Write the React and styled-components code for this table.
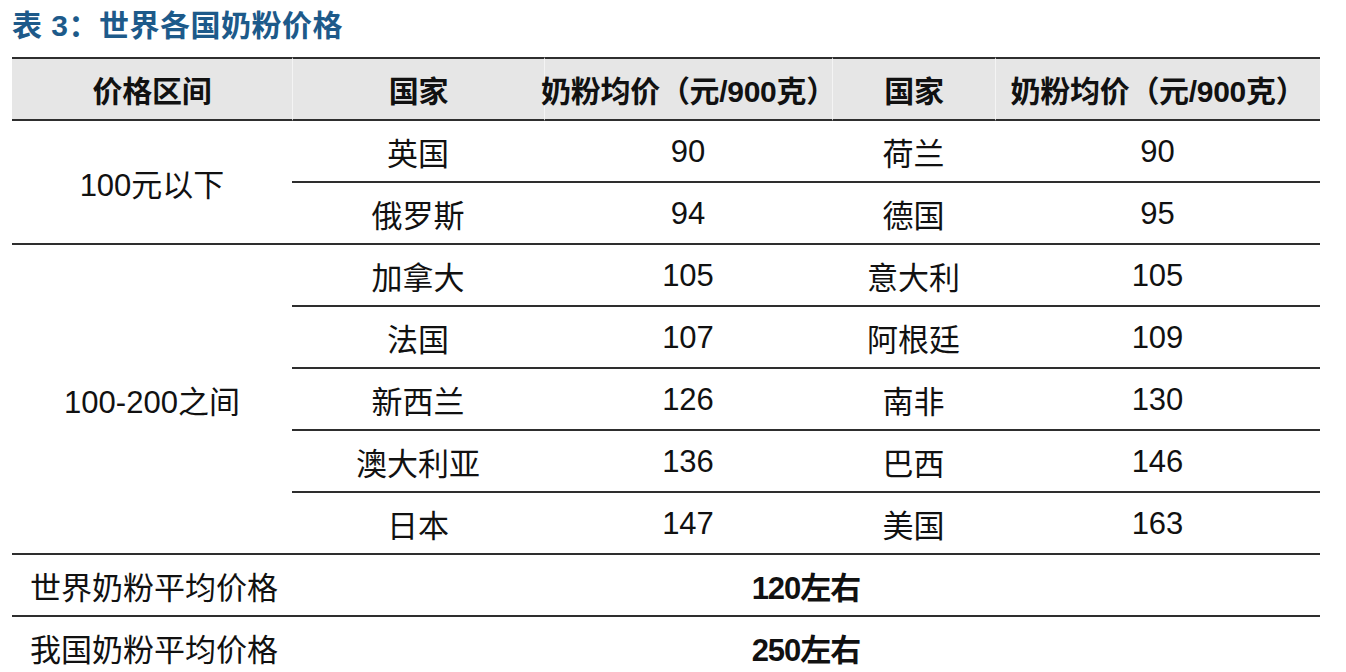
import React from 'react';
import styled, { createGlobalStyle } from 'styled-components';

const GlobalStyle = createGlobalStyle`
  html, body {
    margin: 0;
    padding: 0;
    background: #ffffff;
  }
  body {
    font-family: "Liberation Sans", "Noto Sans CJK SC", sans-serif;
    color: #111;
  }
`;

const groups = [
  {
    range: '100元以下',
    rows: [
      ['英国', '90', '荷兰', '90'],
      ['俄罗斯', '94', '德国', '95'],
    ],
  },
  {
    range: '100-200之间',
    rows: [
      ['加拿大', '105', '意大利', '105'],
      ['法国', '107', '阿根廷', '109'],
      ['新西兰', '126', '南非', '130'],
      ['澳大利亚', '136', '巴西', '146'],
      ['日本', '147', '美国', '163'],
    ],
  },
];

const summary = [
  ['世界奶粉平均价格', '120左右'],
  ['我国奶粉平均价格', '250左右'],
];

const App = () => {
  let row = 2;
  return (
    <Page>
      <GlobalStyle />
      <Title>表 3：世界各国奶粉价格</Title>
      <Table>
        <HeadCell>价格区间</HeadCell>
        <HeadCell $divider>国家</HeadCell>
        <HeadCell $divider>奶粉均价（元/900克）</HeadCell>
        <HeadCell $divider>国家</HeadCell>
        <HeadCell $divider>奶粉均价（元/900克）</HeadCell>

        {groups.map((g) => {
          const start = row;
          row += g.rows.length;
          return (
            <React.Fragment key={g.range}>
              <RangeCell style={{ gridRow: `${start} / span ${g.rows.length}` }}>
                {g.range}
              </RangeCell>
              {g.rows.map((r, i) =>
                r.map((v, j) => (
                  <Cell
                    key={`${g.range}-${i}-${j}`}
                    style={{ gridRow: start + i, gridColumn: j + 2 }}
                  >
                    {v}
                  </Cell>
                ))
              )}
            </React.Fragment>
          );
        })}

        {summary.map(([label, value]) => (
          <React.Fragment key={label}>
            <LabelCell>{label}</LabelCell>
            <ValueCell>{value}</ValueCell>
          </React.Fragment>
        ))}
      </Table>
    </Page>
  );
};

export default App;

const Page = styled.div`
  padding: 8px 0 0 12px;
  width: 1308px;
`;

const Title = styled.h2`
  margin: 0;
  height: 49px;
  font-size: 30px;
  line-height: 36px;
  font-weight: bold;
  color: #1d5a8a;
  letter-spacing: 0.5px;
`;

const Table = styled.div`
  display: grid;
  grid-template-columns: 280px 252px 288px 163px 325px;
  grid-template-rows: 64px;
  grid-auto-rows: 62px;
  font-size: 31px;
`;

const BaseCell = styled.div`
  box-sizing: border-box;
  display: flex;
  align-items: center;
  justify-content: center;
  border-bottom: 2px solid #2e2e2e;
  white-space: nowrap;
`;

const HeadCell = styled(BaseCell)`
  background: #e6e6e6;
  border-top: 2px solid #2e2e2e;
  border-left: ${(p) => (p.$divider ? '1px solid #f4f4f4' : 'none')};
  font-size: 30px;
  font-weight: bold;
  letter-spacing: -0.3px;
`;

const RangeCell = styled(BaseCell)`
  grid-column: 1;
`;

const Cell = styled(BaseCell)`
  padding-top: 1px;
`;

const LabelCell = styled(BaseCell)`
  grid-column: 1;
  justify-content: flex-start;
  padding-left: 18px;
`;

const ValueCell = styled(BaseCell)`
  grid-column: 2 / span 4;
  font-weight: bold;
  letter-spacing: -1px;
`;
